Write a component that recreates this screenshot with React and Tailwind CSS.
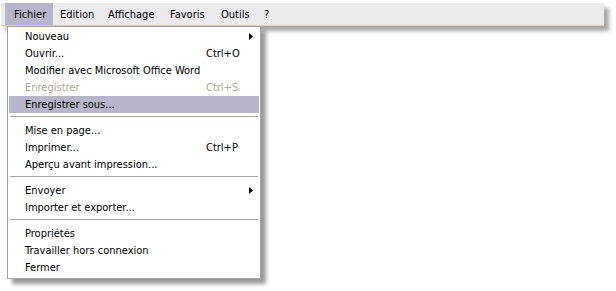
import { Fragment } from "react"

const barItems = [
    { label: "Fichier", w: "w-[48px]", pl: "pl-[9px]", active: true },
    { label: "Edition", w: "w-[48px]", pl: "pl-[7px]" },
    { label: "Affichage", w: "w-[62px]", pl: "pl-[7px]" },
    { label: "Favoris", w: "w-[51px]", pl: "pl-[7px]" },
    { label: "Outils", w: "w-[43px]", pl: "pl-[7px]" },
    { label: "?", w: "w-[20px]", pl: "pl-[7px]" },
]

const groups = [
    [
        { label: "Nouveau", sub: true },
        { label: "Ouvrir...", shortcut: "Ctrl+O" },
        { label: "Modifier avec Microsoft Office Word" },
        { label: "Enregistrer", shortcut: "Ctrl+S", disabled: true },
        { label: "Enregistrer sous...", hover: true },
    ],
    [
        { label: "Mise en page..." },
        { label: "Imprimer...", shortcut: "Ctrl+P" },
        { label: "Aperçu avant impression..." },
    ],
    [
        { label: "Envoyer", sub: true },
        { label: "Importer et exporter..." },
    ],
    [
        { label: "Propriétés" },
        { label: "Travailler hors connexion" },
        { label: "Fermer" },
    ],
]

function Arrow() {
    return (
        <svg width="4" height="7" viewBox="0 0 4 7" className="block">
            <path d="M0 0 L4 3.5 L0 7 Z" fill="#000" />
        </svg>
    )
}

function MenuRow({ item }) {
    return (
        <div className={`flex items-center h-[17px] ${item.hover ? 'bg-[#b6b5c9]' : ''} ${item.disabled ? 'text-[#aca899]' : 'text-black'}`}>
            <span className="w-[197px] pl-[16px] whitespace-nowrap">{item.label}</span>
            {item.shortcut && <span className="whitespace-nowrap">{item.shortcut}</span>}
            {item.sub && <span className="ml-[43px]"><Arrow /></span>}
        </div>
    )
}

export default function App() {
    return (
        <div
            className="w-[616px] h-[291px] bg-white text-[11px] leading-none"
            style={{ fontFamily: "Tahoma, 'DejaVu Sans Condensed', 'Liberation Sans', sans-serif" }}
        >
            <div className="relative pt-[3px] pl-[1px]">
                {/* barre de menus */}
                <div className="flex items-stretch w-[603px] h-[23px] bg-[#ebebee] border-b border-[#d6d0bc] shadow-[5px_5px_4px_rgba(0,0,0,0.35)] pl-[4px]">
                    {barItems.map(b => (
                        <div
                            key={b.label}
                            className={`flex items-center ${b.w} ${b.pl} ${b.active ? 'bg-[#b6b5c9]' : ''} text-black whitespace-nowrap`}
                        >
                            {b.label}
                        </div>
                    ))}
                </div>

                {/* menu Fichier */}
                <div className="absolute left-[7px] top-[26px] w-[254px] bg-white border border-[#a3a3a8] px-[1px] pt-[1px] pb-[2px] shadow-[5px_5px_4px_rgba(0,0,0,0.4)]">
                    {groups.map((g, i) => (
                        <Fragment key={i}>
                            {i > 0 && (
                                <div className="pt-[3px] pb-[5px] pl-[1px] pr-[1px]">
                                    <div className="h-px bg-[#a7a6aa]" />
                                </div>
                            )}
                            {g.map(item => <MenuRow key={item.label} item={item} />)}
                        </Fragment>
                    ))}
                </div>
            </div>
        </div>
    )
}
